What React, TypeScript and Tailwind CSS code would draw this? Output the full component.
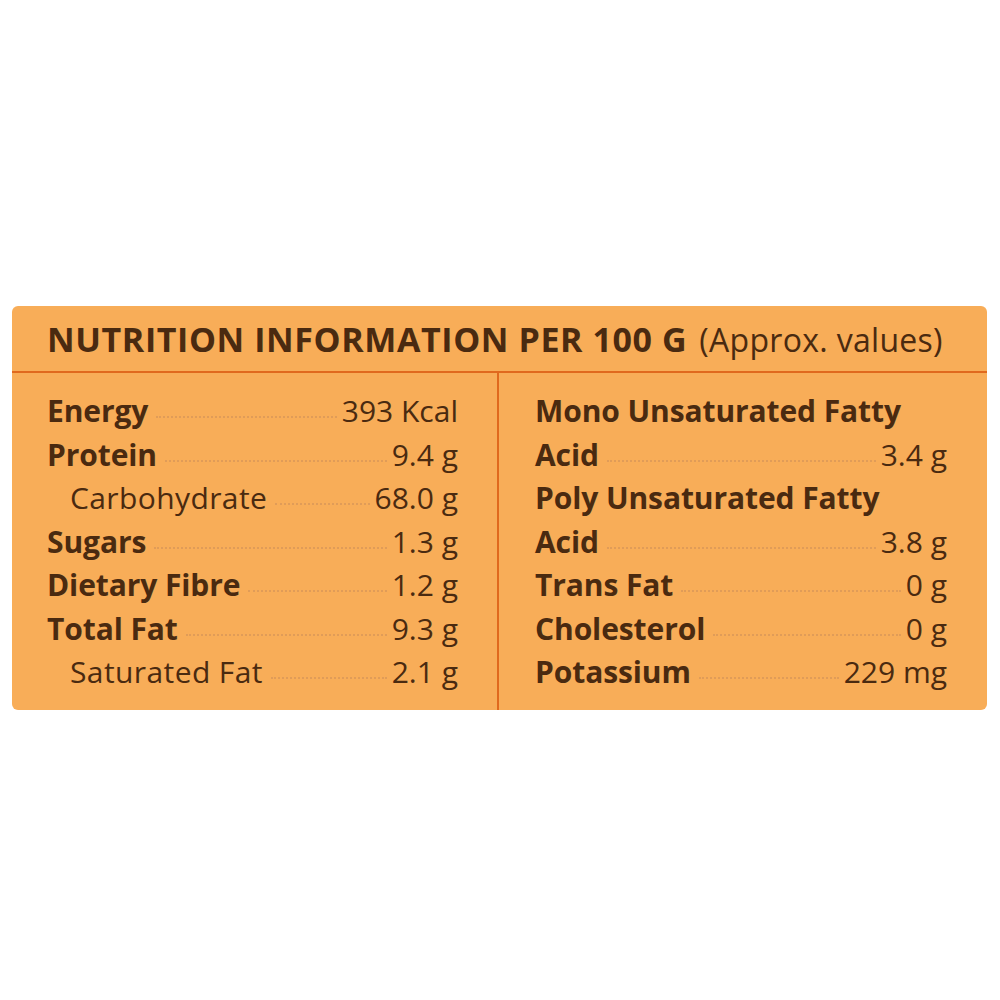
const LEFT = [
  { label: "Energy", value: "393 Kcal", bold: true },
  { label: "Protein", value: "9.4 g", bold: true },
  { label: "Carbohydrate", value: "68.0 g", bold: false },
  { label: "Sugars", value: "1.3 g", bold: true },
  { label: "Dietary Fibre", value: "1.2 g", bold: true },
  { label: "Total Fat", value: "9.3 g", bold: true },
  { label: "Saturated Fat", value: "2.1 g", bold: false },
];

const RIGHT = [
  { label: "Mono Unsaturated Fatty", value: null },
  { label: "Acid", value: "3.4 g" },
  { label: "Poly Unsaturated Fatty", value: null },
  { label: "Acid", value: "3.8 g" },
  { label: "Trans Fat", value: "0 g" },
  { label: "Cholesterol", value: "0 g" },
  { label: "Potassium", value: "229 mg" },
];

function Row({ label, value, bold = true, indent = false }: { label: string; value: string | null; bold?: boolean; indent?: boolean }) {
  return (
    <div className={`flex items-baseline h-[43.5px] leading-[43.5px] ${indent ? "pl-[23px]" : ""}`}>
      <span className={bold ? "font-bold tracking-[-0.1px]" : "font-normal tracking-[0.4px]"}>{label}</span>
      {value && (
        <>
          <span className="flex-1 ml-[8px] mr-[5px] border-b-2 border-dotted border-[#e09c58] translate-y-[-4px]" />
          <span className="font-normal">{value}</span>
        </>
      )}
    </div>
  );
}

export default function App() {
  return (
    <div className="min-h-[1000px] bg-white pt-[306px] pl-[12px] pr-[13px] font-['Open_Sans',sans-serif] text-[#4a2a10]">
      <div className="bg-[#f8ad58] rounded-[6px] h-[404px] flex flex-col overflow-hidden">
        {/* Header */}
        <div className="h-[67px] border-b-2 border-[#e0691e] flex items-center pl-[35px] pt-[2px]">
          <span className="font-bold text-[34px] tracking-[0.6px]">NUTRITION INFORMATION PER 100 G</span>
          <span className="text-[32px] ml-[12px] tracking-[0.3px]">(Approx. values)</span>
        </div>

        {/* Columns */}
        <div className="flex flex-1 text-[30px]">
          <div className="w-[487px] border-r-2 border-[#e0691e] pt-[16px] pl-[35px] pr-[39px]">
            {LEFT.map((r, i) => (
              <Row key={i} label={r.label} value={r.value} bold={r.bold} indent={!r.bold} />
            ))}
          </div>
          <div className="flex-1 pt-[16px] pl-[36px] pr-[40px]">
            {RIGHT.map((r, i) => (
              <Row key={i} label={r.label} value={r.value} />
            ))}
          </div>
        </div>
      </div>
    </div>
  );
}
